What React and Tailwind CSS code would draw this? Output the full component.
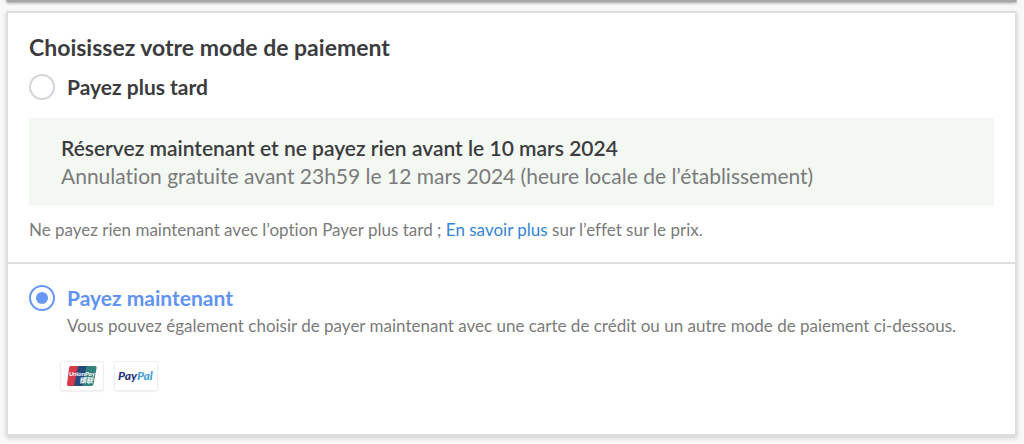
import { useState } from 'react';

const PaymentRadio = ({ id, label, checked, onChange }) => (
  <div className="flex items-center gap-3">
    <input
      type="radio"
      id={id}
      name="payment-mode"
      checked={checked}
      onChange={onChange}
      className="grid size-[26px] shrink-0 appearance-none place-content-center rounded-full border-2 border-[#d4d4da] bg-white before:size-3 before:rounded-full checked:border-[#6796f5] checked:before:bg-[#6796f5]"
    />
    <label
      htmlFor={id}
      className={
        checked
          ? 'text-[21px] leading-7 font-bold text-[#6193f3]'
          : 'text-[21px] leading-7 font-bold text-[#3c3c3f]'
      }
    >
      {label}
    </label>
  </div>
);

const UnionPayLogo = () => (
  <svg viewBox="0 0 32 22" className="h-[22px] w-8" role="img" aria-label="UnionPay">
    <path d="M4.500 1H13L9 21H2.500Q.6 21 1 19L3 3Q3.400 1 4.500 1Z" fill="#d83a47" />
    <path d="M12 1h10l-4 20H8Z" fill="#24497b" />
    <path d="M20.500 1H29q2 0 1.600 2l-3 16q-.4 2-2.400 2h-8.700Z" fill="#34807f" />
    <text x="3" y="11" fontSize="6.400" fontStyle="italic" fontWeight="700" fill="#fff" fontFamily="Lato, sans-serif">
      UnionPay
    </text>
    <text
      x="13"
      y="18"
      fontSize="7"
      fontStyle="italic"
      fontWeight="700"
      fill="#fff"
      fontFamily="'Noto Sans CJK SC', sans-serif"
    >
      银联
    </text>
  </svg>
);

const PayPalLogo = () => (
  <svg viewBox="0 0 36 16" className="h-4 w-9" role="img" aria-label="PayPal">
    <text x="0" y="12" fontSize="12" fontStyle="italic" fontWeight="900" fontFamily="Lato, sans-serif">
      <tspan fill="#29357f">Pay</tspan>
      <tspan fill="#4a9fda">Pal</tspan>
    </text>
  </svg>
);

const LogoTile = ({ children }) => (
  <li className="flex h-7 w-[42px] items-center justify-center rounded-xs bg-white shadow-[0_0_0_1px_#eeeeee,0_1px_2px_#cccccc]">
    {children}
  </li>
);

export default function App() {
  const [mode, setMode] = useState('now');

  return (
    <main className="min-h-screen bg-[#f8f8f8] pr-[7px] pb-2 pl-[6px] font-[Lato,sans-serif] text-[#7b7b7b] [font-variant-ligatures:none]">
      <div className="h-0.5 rounded-b-xs bg-[#a6a6a6] shadow-[0_1px_3px_#888]" />
      <form className="mt-[9px] rounded-xs border-2 border-[#dedee0] bg-white shadow-[0_2px_4px_#cfcfcf]">
        <section className="border-b-2 border-[#dfdfe1] px-[21px] py-5">
          <h1 className="mb-3 text-[23px] leading-7 font-bold text-[#3c3c3f]">Choisissez votre mode de paiement</h1>
          <PaymentRadio
            id="pay-later"
            label="Payez plus tard"
            checked={mode === 'later'}
            onChange={() => setMode('later')}
          />
          <div className="mt-[17px] bg-[#f3f8f3] px-8 py-4 text-[21px] leading-7">
            <p className="font-semibold text-[#3c3c3f]">Réservez maintenant et ne payez rien avant le 10 mars 2024</p>
            <p>Annulation gratuite avant 23h59 le 12 mars 2024 (heure locale de l’établissement)</p>
          </div>
          <p className="mt-3 text-[17px] leading-6">
            Ne payez rien maintenant avec l’option Payer plus tard ;{' '}
            <a href="#pay-later" className="text-[#3486d2]">
              En savoir plus
            </a>{' '}
            sur l’effet sur le prix.
          </p>
        </section>

        <section className="px-[21px] pt-5 pb-11">
          <PaymentRadio
            id="pay-now"
            label="Payez maintenant"
            checked={mode === 'now'}
            onChange={() => setMode('now')}
          />
          <p className="ml-[38px] text-[17px] leading-7">
            Vous pouvez également choisir de payer maintenant avec une carte de crédit ou un autre mode de paiement
            ci-dessous.
          </p>
          <ul className="mt-[22px] ml-8 flex gap-3">
            <LogoTile>
              <UnionPayLogo />
            </LogoTile>
            <LogoTile>
              <PayPalLogo />
            </LogoTile>
          </ul>
        </section>
      </form>
    </main>
  );
}
